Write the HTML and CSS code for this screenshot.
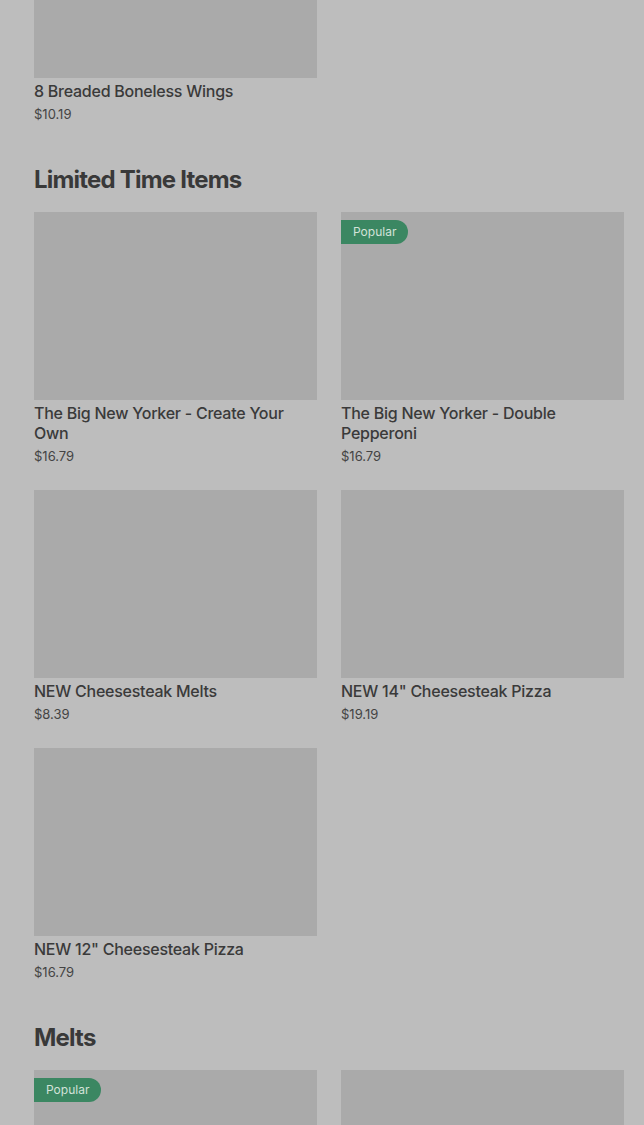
FILE: index.html
```html
<!DOCTYPE html>
<html lang="en">
<head>
    <meta charset="UTF-8">
    <meta name="viewport" content="width=device-width, initial-scale=1.0">
    <title>Menu</title>
    <link rel="stylesheet" href="styles.css">
</head>
<body>
    <div class="menu">
        <section class="section first">
            <div class="grid">
                <div class="item">
                    <div class="photo"></div>
                    <div class="name">8 Breaded Boneless Wings</div>
                    <div class="price">$10.19</div>
                </div>
            </div>
        </section>

        <section class="section">
            <h2>Limited Time Items</h2>
            <div class="grid">
                <div class="item">
                    <div class="photo"></div>
                    <div class="name">The Big New Yorker - Create Your Own</div>
                    <div class="price">$16.79</div>
                </div>
                <div class="item">
                    <div class="photo"><span class="badge">Popular</span></div>
                    <div class="name">The Big New Yorker - Double Pepperoni</div>
                    <div class="price">$16.79</div>
                </div>
                <div class="item">
                    <div class="photo"></div>
                    <div class="name">NEW Cheesesteak Melts</div>
                    <div class="price">$8.39</div>
                </div>
                <div class="item">
                    <div class="photo"></div>
                    <div class="name">NEW 14" Cheesesteak Pizza</div>
                    <div class="price">$19.19</div>
                </div>
                <div class="item">
                    <div class="photo"></div>
                    <div class="name">NEW 12" Cheesesteak Pizza</div>
                    <div class="price">$16.79</div>
                </div>
            </div>
        </section>

        <section class="section">
            <h2>Melts</h2>
            <div class="grid">
                <div class="item">
                    <div class="photo"><span class="badge">Popular</span></div>
                </div>
                <div class="item">
                    <div class="photo"></div>
                </div>
            </div>
        </section>
    </div>
</body>
</html>
```

FILE: styles.css
```css
body {
    margin: 0;
    background-color: #bdbdbd;
    font-family: 'Inter', 'Roboto', sans-serif;
    color: #3a3a3a;
    overflow: hidden;
}

.menu {
    padding: 0 20px 0 34px;
    margin-top: -110px;
}

.section {
    margin-top: 40px;
}

.section.first {
    margin-top: 0;
}

h2 {
    margin: 0 0 16px;
    font-size: 24px;
    line-height: 32px;
    font-weight: 700;
    letter-spacing: -0.8px;
    color: #393939;
}

.grid {
    display: grid;
    grid-template-columns: 1fr 1fr;
    column-gap: 24px;
    row-gap: 24px;
}

.photo {
    position: relative;
    height: 188px;
    background-color: #aaaaaa;
}

.badge {
    position: absolute;
    top: 8px;
    left: 0;
    height: 24px;
    line-height: 24px;
    padding: 0 12px;
    font-size: 12px;
    color: #d3e2d9;
    background-color: #3b8762;
    border-radius: 0 12px 12px 0;
}

.name {
    margin-top: 3px;
    font-size: 16px;
    line-height: 20px;
    font-weight: 500;
    letter-spacing: -0.25px;
}

.price {
    margin-top: 3px;
    font-size: 13px;
    line-height: 20px;
    color: #444444;
}
```
